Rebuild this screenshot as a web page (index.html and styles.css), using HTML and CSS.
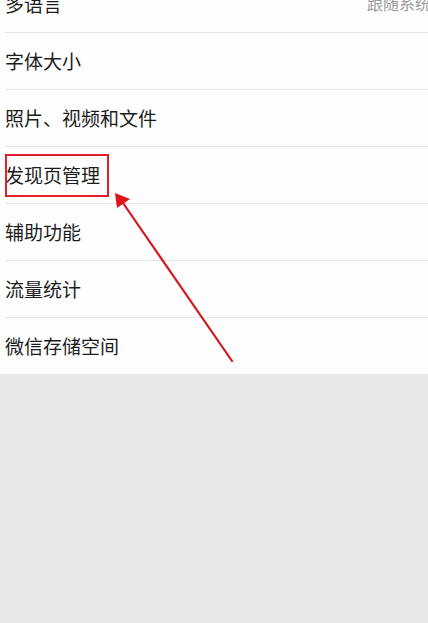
FILE: index.html
```html
<!DOCTYPE html>
<html lang="zh-CN">
<head>
<meta charset="utf-8">
<title>通用设置</title>
<link rel="stylesheet" href="styles.css">
</head>
<body>
<div class="page">
  <ul class="list">
    <li class="row"><span class="label">多语言</span><span class="value">跟随系统</span></li>
    <li class="row"><span class="label">字体大小</span></li>
    <li class="row"><span class="label">照片、视频和文件</span></li>
    <li class="row"><span class="label">发现页管理</span></li>
    <li class="row"><span class="label">辅助功能</span></li>
    <li class="row"><span class="label">流量统计</span></li>
    <li class="row last"><span class="label">微信存储空间</span></li>
  </ul>
  <div class="highlight"></div>
  <svg class="arrow" width="428" height="623" viewBox="0 0 428 623">
    <line x1="123" y1="203" x2="232" y2="361" stroke="#d8141c" stroke-width="2.2" stroke-linecap="round"/>
    <polygon points="115,193 117,208 130,199" fill="#e0141c"/>
  </svg>
</div>
</body>
</html>
```
FILE: styles.css
```css
html, body {
  margin: 0;
  padding: 0;
  background: #e8e8e6;
}
.page {
  position: relative;
  width: 428px;
  height: 623px;
  overflow: hidden;
  font-family: "Noto Sans CJK SC", "Noto Sans", sans-serif;
}
.list {
  list-style: none;
  margin: -24px 0 0 0;
  padding: 0 0 0 5px;
  background: #fefefe;
}
.row {
  display: flex;
  align-items: center;
  justify-content: space-between;
  height: 54px;
  padding-bottom: 2px;
  border-bottom: 1px solid #e6e6e6;
}
.row.last {
  border-bottom: none;
}
.label {
  font-size: 19px;
  color: #1c1c1c;
  line-height: 1;
}
.value {
  font-size: 16px;
  color: #9a9a9a;
  line-height: 1;
  margin-right: -3px;
  white-space: nowrap;
}
.highlight {
  position: absolute;
  left: 5px;
  top: 154px;
  width: 100px;
  height: 39px;
  border: 2px solid #e0202a;
}
.arrow {
  position: absolute;
  left: 0;
  top: 0;
}
```
